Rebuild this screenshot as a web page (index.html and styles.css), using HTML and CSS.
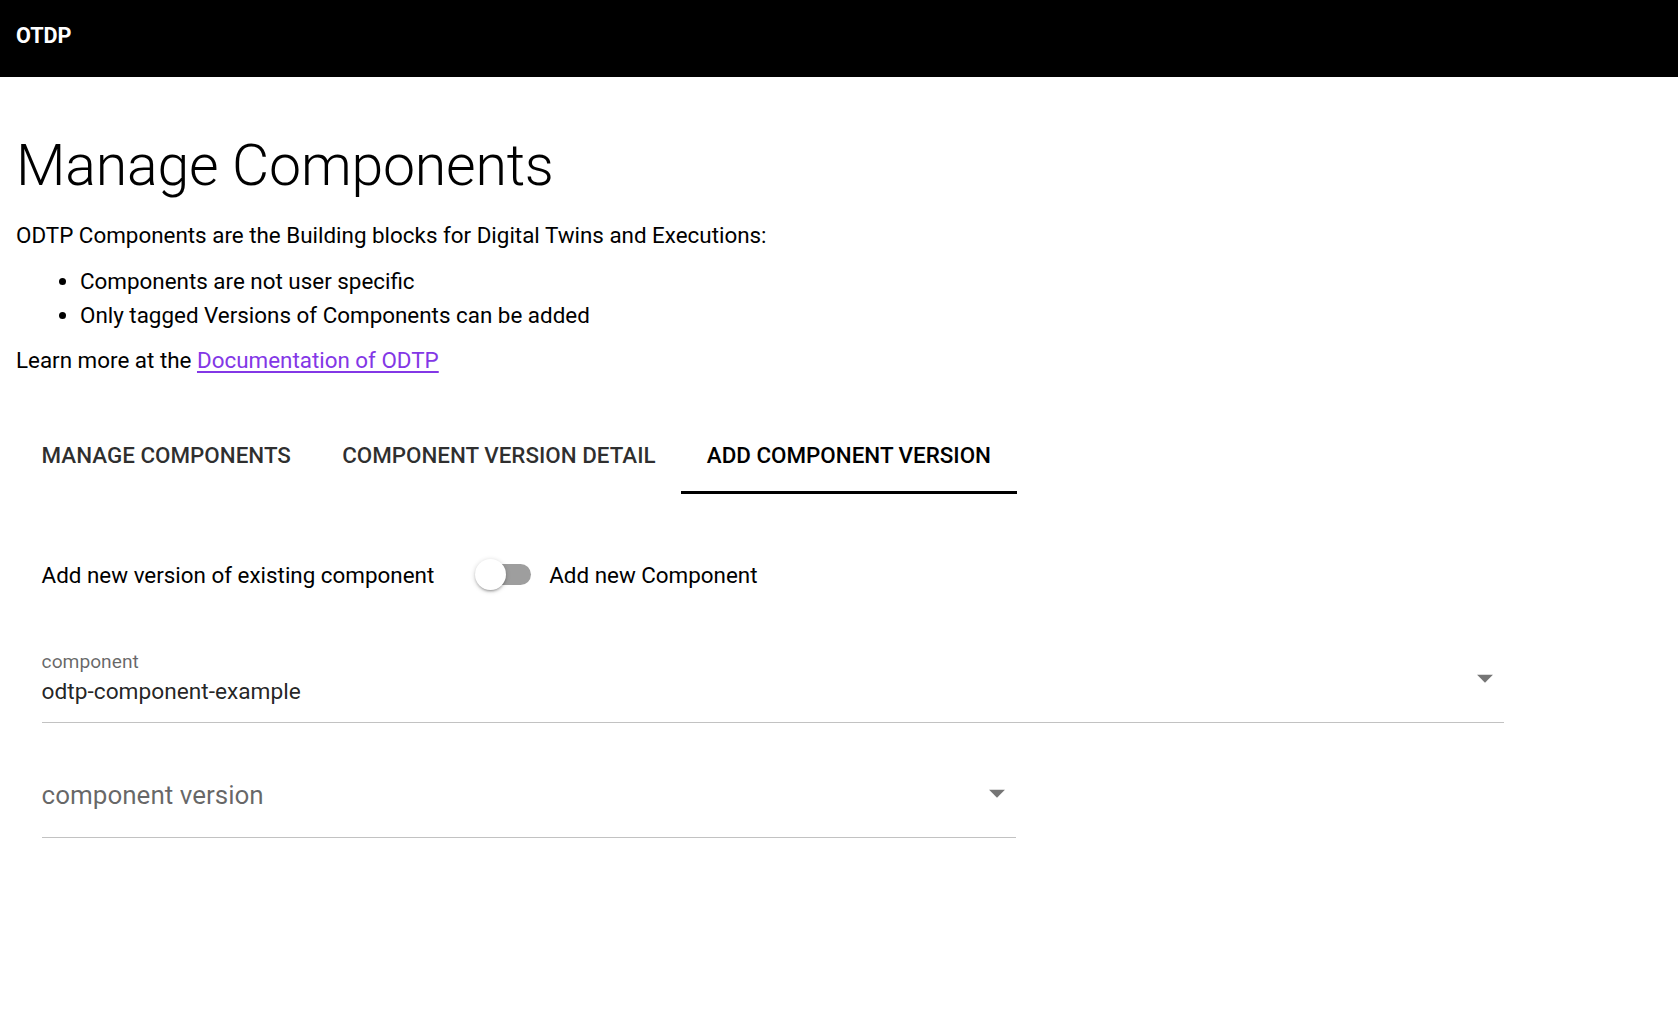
FILE: index.html
```html
<!DOCTYPE html>
<html lang="en">
<head>
<meta charset="utf-8">
<title>OTDP - Manage Components</title>
<link rel="stylesheet" href="styles.css">
</head>
<body>
<header class="topbar"><span class="brand">OTDP</span></header>
<main class="page">
  <h1 class="title">Manage Components</h1>
  <p class="intro">ODTP Components are the Building blocks for Digital Twins and Executions:</p>
  <ul class="bullets">
    <li>Components are not user specific</li>
    <li>Only tagged Versions of Components can be added</li>
  </ul>
  <p class="learn">Learn more at the <a class="doc-link" href="#">Documentation of ODTP</a></p>

  <nav class="tabs">
    <div class="tab">Manage Components</div>
    <div class="tab">Component Version Detail</div>
    <div class="tab tab-active">Add Component Version</div>
  </nav>

  <section class="panel">
    <div class="panel-stack">
      <div class="toggle-row">
        <span class="toggle-label">Add new version of existing component</span>
        <span class="toggle">
          <span class="toggle-track"></span>
          <span class="toggle-knob"></span>
        </span>
        <span class="toggle-label">Add new Component</span>
      </div>

      <div class="field field-wide">
        <div class="field-body">
          <div class="field-label">component</div>
          <div class="field-value">odtp-component-example</div>
        </div>
        <svg class="field-icon" viewBox="0 0 24 24" width="38" height="38"><path d="M7 10l5 5 5-5z"/></svg>
      </div>

      <div class="field field-narrow">
        <div class="field-body">
          <div class="field-placeholder">component version</div>
        </div>
        <svg class="field-icon" viewBox="0 0 24 24" width="38" height="38"><path d="M7 10l5 5 5-5z"/></svg>
      </div>
    </div>
  </section>
</main>
</body>
</html>
```

FILE: styles.css
```css
* { box-sizing: border-box; }

html, body {
  margin: 0;
  padding: 0;
  background: #ffffff;
  font-family: Roboto, "Liberation Sans", Arial, sans-serif;
  color: rgba(0, 0, 0, 0.87);
}

.topbar {
  height: 77px;
  background: #000000;
  padding: 25px 16px 0;
}

.brand {
  display: block;
  color: #ffffff;
  font-weight: 700;
  font-size: 21.6px;
  line-height: 21.6px;
}

.page {
  padding: 0 16px;
}

.title {
  margin: 59.5px 0 0;
  font-size: 57.2px;
  line-height: 57.6px;
  font-weight: 300;
  color: #000;
  letter-spacing: -0.2px;
}

.intro, .learn {
  font-size: 22.4px;
  line-height: 33.6px;
  color: #000;
}

.intro { margin: 25.4px 0 0; }

.bullets {
  margin: 10.6px 0 0;
  padding-left: 64px;
  font-size: 22.4px;
  line-height: 34.3px;
  color: #000;
}

.learn { margin: 11.4px 0 0; }

.doc-link {
  color: #8337e6;
  text-decoration: underline;
  text-underline-offset: 3px;
}

.tabs {
  display: flex;
  margin-top: 39.5px;
  height: 76.8px;
}

.tab {
  position: relative;
  display: flex;
  align-items: center;
  padding: 0 25.6px 1px;
  font-size: 22.4px;
  font-weight: 500;
  text-transform: uppercase;
  color: rgba(0, 0, 0, 0.82);
}

.tab-active {
  color: #000;
  border-bottom: 3.2px solid #000;
  padding-top: 2.2px;
  padding-bottom: 0;
}

.panel {
  padding: 25.6px;
}

.panel-stack {
  display: flex;
  flex-direction: column;
  gap: 25.6px;
  padding-top: 23.6px;
}

.toggle-row {
  display: flex;
  align-items: center;
  height: 64px;
}

.toggle-label {
  font-size: 22.4px;
  color: #000;
}

.toggle {
  position: relative;
  width: 56px;
  height: 32px;
  margin: 0 18px 0 41px;
  display: flex;
  align-items: center;
}

.toggle-track {
  display: block;
  width: 54px;
  height: 21px;
  margin-left: 2px;
  border-radius: 11px;
  background: #9e9e9e;
}

.toggle-knob {
  position: absolute;
  left: 0;
  top: 0.5px;
  width: 31px;
  height: 31px;
  border-radius: 50%;
  background: #ffffff;
  box-shadow: 0 1px 5px rgba(0, 0, 0, 0.2), 0 2px 2px rgba(0, 0, 0, 0.14), 0 3px 1px -2px rgba(0, 0, 0, 0.12);
}

.field {
  display: flex;
  align-items: center;
  height: 88.6px;
  border-bottom: 1.6px solid rgba(0, 0, 0, 0.24);
}

.field-wide { width: 1462px; margin-top: 2px; }
.field-narrow { width: 974px; margin-top: 1px; }

.field-body {
  flex: 1;
  display: flex;
  flex-direction: column;
  justify-content: center;
}

.field-label {
  font-size: 19.2px;
  line-height: 24px;
  color: rgba(0, 0, 0, 0.6);
  margin-top: 3px;
}

.field-value {
  font-size: 22.7px;
  line-height: 33.6px;
  color: rgba(0, 0, 0, 0.87);
  margin-top: 1px;
}

.field-placeholder {
  font-size: 26px;
  line-height: 33.6px;
  color: rgba(0, 0, 0, 0.6);
  margin-top: 4px;
}

.field-icon {
  flex: none;
  fill: rgba(0, 0, 0, 0.54);
  margin-right: 0;
  margin-top: 0;
}
```
